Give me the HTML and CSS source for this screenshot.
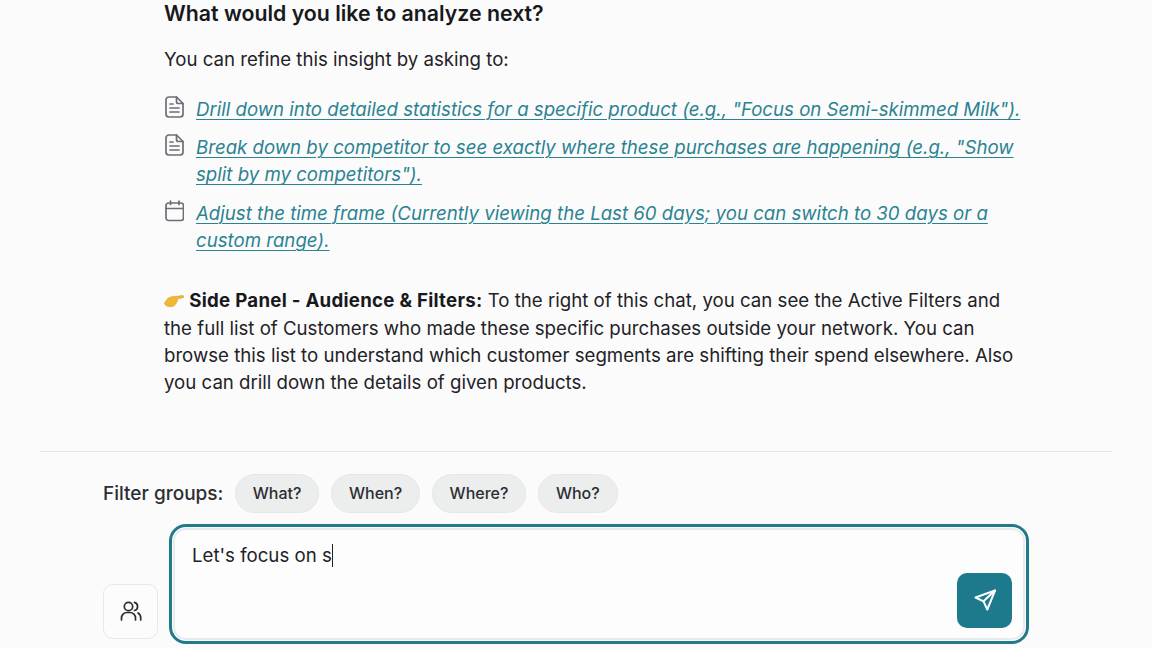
FILE: index.html
```html
<!DOCTYPE html>
<html lang="en">
<head>
<meta charset="utf-8">
<title>Chat</title>
<link rel="stylesheet" href="styles.css">
</head>
<body>
<main class="page">
  <section class="answer">
    <h2 class="title">What would you like to analyze next?</h2>
    <p class="intro">You can refine this insight by asking to:</p>
    <ul class="links">
      <li class="link-row">
        <svg class="row-icon" viewBox="0 0 19 22" fill="none" stroke="#6b6f76" stroke-width="1.7" stroke-linecap="round" stroke-linejoin="round"><path d="M11.500 1H4a3 3 0 0 0-3 3v14a3 3 0 0 0 3 3h11a3 3 0 0 0 3-3V7.500z"/><path d="M11.500 1v4.500a2 2 0 0 0 2 2H18"/><path d="M5 8h3M5 12h9M5 16h9"/></svg>
        <a class="link" href="#">Drill down into detailed statistics for a specific product (e.g., "Focus on Semi-skimmed Milk").</a>
      </li>
      <li class="link-row">
        <svg class="row-icon" viewBox="0 0 19 22" fill="none" stroke="#6b6f76" stroke-width="1.7" stroke-linecap="round" stroke-linejoin="round"><path d="M11.500 1H4a3 3 0 0 0-3 3v14a3 3 0 0 0 3 3h11a3 3 0 0 0 3-3V7.500z"/><path d="M11.500 1v4.500a2 2 0 0 0 2 2H18"/><path d="M5 8h3M5 12h9M5 16h9"/></svg>
        <a class="link" href="#">Break down by competitor to see exactly where these purchases are happening (e.g., "Show split by my competitors").</a>
      </li>
      <li class="link-row">
        <svg class="row-icon" viewBox="0 0 19 22" fill="none" stroke="#6b6f76" stroke-width="1.7" stroke-linecap="round" stroke-linejoin="round"><rect x="1" y="3" width="17.500" height="17.500" rx="2.500"/><path d="M1 8.500h17.500M5.500 1v3.500M14 1v3.500"/></svg>
        <a class="link" href="#">Adjust the time frame (Currently viewing the Last 60 days; you can switch to 30 days or a custom range).</a>
      </li>
    </ul>
    <p class="note">
      <svg class="hand" viewBox="0 0 20 14"><path d="M.5 9 3.500 4.800C4.800 3.600 6.500 3 8 2.700L13 2.300l5.600-.8c1.300 0 1.500 2.200 0 2.400l-5.600.9.600 1.200-.5 1.800-.9.600-.1 1.400-1.300.8-.6 1.200-1.600.6H5.500C3 12.600 1 11.500.5 9z" fill="#f3b833" stroke="#cf8f1c" stroke-width=".5" stroke-linejoin="round"/></svg>
      <strong>Side Panel - Audience &amp; Filters:</strong> To the right of this chat, you can see the Active Filters and the full list of Customers who made these specific purchases outside your network. You can browse this list to understand which customer segments are shifting their spend elsewhere. Also you can drill down the details of given products.
    </p>
  </section>
  <hr class="divider">
  <section class="composer">
    <div class="filters">
      <span class="filters-label">Filter groups:</span>
      <button class="chip">What?</button>
      <button class="chip">When?</button>
      <button class="chip">Where?</button>
      <button class="chip">Who?</button>
    </div>
    <div class="input-row">
      <button class="audience">
        <svg viewBox="0 0 24 24" width="24" height="24" fill="none" stroke="#2b2e33" stroke-width="1.700" stroke-linecap="round" stroke-linejoin="round"><circle cx="9.500" cy="7.500" r="4.200"/><path d="M2.500 21v-2a5.500 5.500 0 0 1 5.500-5.500h3a5.500 5.500 0 0 1 5.500 5.500v2"/><path d="M15.500 3.400a4.200 4.200 0 0 1 0 8.100"/><path d="M19 13.900a5.500 5.500 0 0 1 2.700 5.100v2"/></svg>
      </button>
      <div class="input-box">
        <div class="input-text"><span>Let's focus on s</span><span class="caret"></span></div>
        <button class="send">
          <svg viewBox="0 0 24 24" width="24" height="24" fill="none" stroke="#fff" stroke-width="2" stroke-linecap="round" stroke-linejoin="round"><path d="M22 2.500 2.500 9.500l8 3.800 3.800 8.200z"/><path d="M22 2.500 10.500 13.300"/></svg>
        </button>
      </div>
    </div>
  </section>
</main>
</body>
</html>
```
FILE: styles.css
```css
* { box-sizing: border-box; }
html, body { margin: 0; height: 648px; overflow: hidden; }
body {
  background: #fbfbfb;
  color: #1f2227;
  font-family: Inter, "Liberation Sans", sans-serif;
  font-size: 18.65px;
  line-height: 27.3px;
}
.page { display: flex; flex-direction: column; height: 648px; }
.answer { padding: 0 128px 0 164px; }
.title { margin: 0; font-size: 21.3px; line-height: 27px; font-weight: 600; color: #17191d; }
.intro { margin: 19px 0 0; }
.links { list-style: none; margin: 22.5px 0 0; padding: 0; display: flex; flex-direction: column; gap: 11px; }
.link-row { display: flex; gap: 12px; align-items: flex-start; }
.row-icon { flex: none; width: 19px; height: 22px; margin-left: 1px; margin-top: 0; }
.link { color: #2b8391; font-style: italic; text-decoration: underline; text-decoration-thickness: 1.3px; text-underline-offset: 3px; }
.note { margin: 33px 0 0; }
.hand { width: 20px; height: 14px; vertical-align: -1px; }
.note strong { font-weight: 700; color: #17191d; letter-spacing: 0.28px; }
.divider { width: 1072px; margin: 54.5px 0 0 40px; border: 0; border-top: 1px solid #e4e5e6; }
.composer { padding: 22px 0 0 103px; display: flex; flex-direction: column; }
.filters { display: flex; align-items: center; gap: 11.5px; }
.filters-label { font-size: 19px; font-weight: 500; color: #2b2e33; }
.chip {
  height: 39px; padding: 0 17px; border: 1px solid #e6e7e9; border-radius: 20px;
  background: #eceded; color: #2b2e33; font: 500 16px Inter, sans-serif;
}
.input-row { display: flex; align-items: flex-end; gap: 11px; margin-top: 11px; }
.audience {
  width: 55px; height: 55px; margin-bottom: 5px; flex: none; display: flex; align-items: center; justify-content: center;
  border: 1px solid #e8e9ea; border-radius: 10px; background: #fcfcfc; padding: 0;
}
.input-box {
  width: 860px; height: 120px; padding: 0 14px 13px 20px; display: flex; justify-content: space-between; align-items: flex-end; position: relative;
  border: 3px solid #1f7a8c; border-radius: 17px; background: #fdfdfd; box-shadow: inset 0 0 0 1px #fff, inset 0 0 0 3px #e9ebef;
}
.input-text { position: absolute; left: 20px; top: 15px; display: flex; align-items: center; }
.caret { width: 1.500px; height: 23px; background: #1f2227; margin-left: 0; }
.send {
  margin-left: auto; width: 55px; height: 55px; border: 0; border-radius: 10px; background: #1c7a8c; padding: 0;
  display: flex; align-items: center; justify-content: center;
}
```
